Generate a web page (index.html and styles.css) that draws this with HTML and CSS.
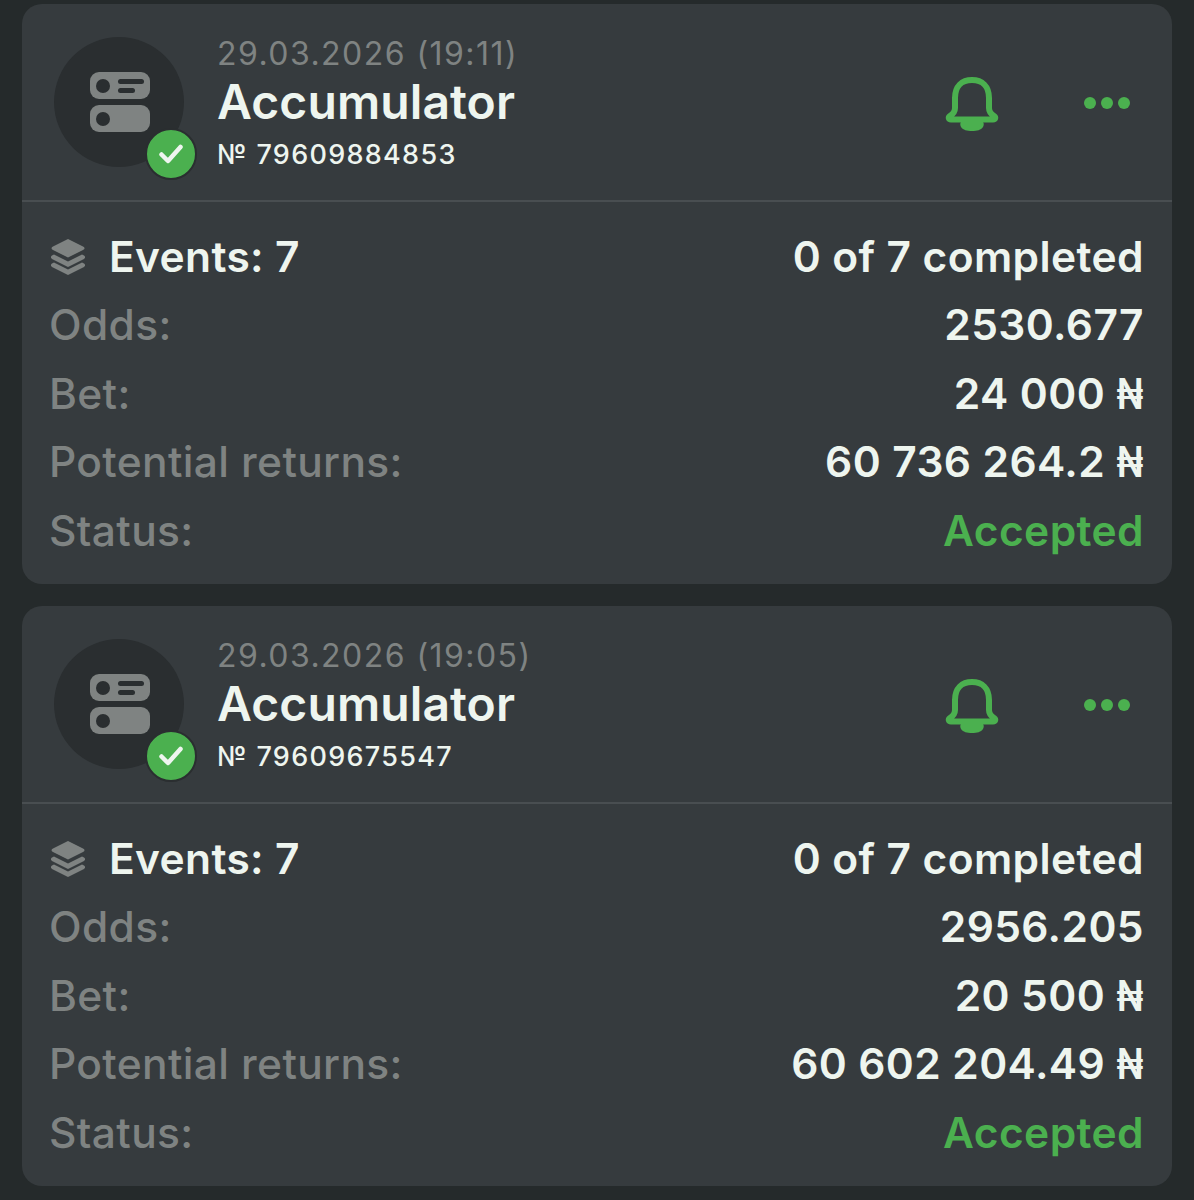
FILE: index.html
```html
<!DOCTYPE html>
<html lang="en">
<head>
<meta charset="utf-8">
<title>Bets</title>
<link rel="stylesheet" href="styles.css">
</head>
<body>
<svg class="defs" width="0" height="0" aria-hidden="true">
  <defs>
    <symbol id="coupon" viewBox="0 0 60 60">
      <rect x="0" y="0" width="60" height="27" rx="9" fill="#7f8382"/>
      <rect x="0" y="33" width="60" height="27" rx="9" fill="#7f8382"/>
      <circle cx="13" cy="14" r="7" fill="#2a2e30"/>
      <circle cx="13" cy="47" r="7" fill="#2a2e30"/>
      <rect x="28" y="7" width="26" height="5" rx="2.500" fill="#2a2e30"/>
      <rect x="28" y="16" width="17" height="5" rx="2.500" fill="#2a2e30"/>
    </symbol>
    <symbol id="bell" viewBox="0 0 54 56">
      <path d="M10 32V22C10 10 17 4 27 4s17 6 17 18v10c0 3 2 6 5 8 2 1.500 1.500 3.500-1 3.500H6c-2.500 0-3-2-1-3.500 3-2 5-5 5-8Z" fill="none" stroke="#4bb04f" stroke-width="6" stroke-linejoin="round"/>
      <path d="M16 46h22c1 1 1 3 0 5-2 3-6 4-11 4s-9-1-11-4c-1-2-1-4 0-5Z" fill="#4bb04f"/>
    </symbol>
    <symbol id="layers" viewBox="0 0 34 36">
      <path d="M17 0 32 7.500c2 1 2 2.500 0 3.500L17 18.500 2 11C0 10 0 8.500 2 7.500Z" fill="#7f8382"/>
      <path d="M3 15.500 17 22.500l14-7 2 1c1.500 1 1.500 2.500 0 3.500L17 28 1 20c-1.500-1-1.500-2.500 0-3.500Z" fill="#7f8382"/>
      <path d="M3 23.500 17 30.500l14-7 2 1c1.500 1 1.500 2.500 0 3.500L17 36 1 28c-1.500-1-1.500-2.500 0-3.500Z" fill="#7f8382"/>
    </symbol>
    <symbol id="check" viewBox="0 0 24 20">
      <path d="M2.500 10.500 9 17 21.500 3" fill="none" stroke="#eef5ef" stroke-width="4.500" stroke-linecap="round" stroke-linejoin="round"/>
    </symbol>
  </defs>
</svg>

<main class="list">
  <article class="card">
    <header class="head">
      <div class="avatar">
        <svg class="avatar-icon"><use href="#coupon"/></svg>
        <span class="badge"><svg class="badge-icon"><use href="#check"/></svg></span>
      </div>
      <div class="titles">
        <div class="date">29.03.2026 (19:11)</div>
        <div class="title">Accumulator</div>
        <div class="number">№ 79609884853</div>
      </div>
      <svg class="bell"><use href="#bell"/></svg>
      <div class="more"><i></i><i></i><i></i></div>
    </header>
    <div class="body">
      <div class="row"><span class="events"><svg class="layers"><use href="#layers"/></svg>Events: 7</span><span class="value">0 of 7 completed</span></div>
      <div class="row"><span class="label">Odds:</span><span class="value">2530.677</span></div>
      <div class="row"><span class="label">Bet:</span><span class="value">24 000 <span class="naira">₦</span></span></div>
      <div class="row"><span class="label">Potential returns:</span><span class="value">60 736 264.2 <span class="naira">₦</span></span></div>
      <div class="row"><span class="label">Status:</span><span class="value accepted">Accepted</span></div>
    </div>
  </article>

  <article class="card">
    <header class="head">
      <div class="avatar">
        <svg class="avatar-icon"><use href="#coupon"/></svg>
        <span class="badge"><svg class="badge-icon"><use href="#check"/></svg></span>
      </div>
      <div class="titles">
        <div class="date">29.03.2026 (19:05)</div>
        <div class="title">Accumulator</div>
        <div class="number">№ 79609675547</div>
      </div>
      <svg class="bell"><use href="#bell"/></svg>
      <div class="more"><i></i><i></i><i></i></div>
    </header>
    <div class="body">
      <div class="row"><span class="events"><svg class="layers"><use href="#layers"/></svg>Events: 7</span><span class="value">0 of 7 completed</span></div>
      <div class="row"><span class="label">Odds:</span><span class="value">2956.205</span></div>
      <div class="row"><span class="label">Bet:</span><span class="value">20 500 <span class="naira">₦</span></span></div>
      <div class="row"><span class="label">Potential returns:</span><span class="value">60 602 204.49 <span class="naira">₦</span></span></div>
      <div class="row"><span class="label">Status:</span><span class="value accepted">Accepted</span></div>
    </div>
  </article>
</main>
</body>
</html>
```
FILE: styles.css
```css
* { box-sizing: border-box; }
html, body { margin: 0; height: 1200px; overflow: hidden; }
body {
  background: #252a2b;
  font-family: Inter, "Liberation Sans", sans-serif;
  color: #eef5ef;
}
.defs { display: block; height: 0; }
.list {
  display: flex;
  flex-direction: column;
  gap: 22px;
  padding: 4px 22px 0;
}
.card {
  height: 580px;
  background: #363b3e;
  border-radius: 20px;
  overflow: hidden;
}
.head {
  display: flex;
  align-items: flex-start;
  height: 198px;
  padding: 33px 42px 0 32px;
  border-bottom: 2px solid #494e51;
}
.avatar {
  position: relative;
  flex: none;
  display: flex;
  align-items: center;
  justify-content: center;
  width: 130px;
  height: 130px;
  border-radius: 50%;
  background: #2a2e30;
}
.avatar-icon { width: 60px; height: 60px; margin-left: 1px; }
.badge {
  position: absolute;
  right: -13px;
  bottom: -13px;
  display: flex;
  align-items: center;
  justify-content: center;
  width: 52px;
  height: 52px;
  border: 2px solid #2a2e30;
  border-radius: 50%;
  background: #4bb04f;
}
.badge-icon { width: 24px; height: 20px; }
.titles {
  flex: 1;
  margin-left: 34px;
  margin-top: -3px;
}
.date { font-size: 32px; line-height: 40px; color: #7f8382; letter-spacing: 1.45px; margin-left: -1px; }
.title { font-size: 48px; line-height: 56px; font-weight: 600; letter-spacing: 0.1px; margin-left: -1px; }
.number { font-size: 27px; line-height: 40px; font-weight: 500; letter-spacing: 1.3px; margin: 5px 0 0 -1px; }
.bell { flex: none; width: 54px; height: 56px; margin-top: 39px; }
.more {
  flex: none;
  display: flex;
  gap: 5px;
  margin: 60px 0 0 85px;
}
.more i {
  display: block;
  width: 12px;
  height: 12px;
  border-radius: 50%;
  background: #4bb04f;
}
.body {
  display: flex;
  flex-direction: column;
  padding: 20px 28px 0;
}
.row {
  display: flex;
  align-items: center;
  justify-content: space-between;
  height: 68.500px;
  font-size: 42.500px;
  font-weight: 600;
  letter-spacing: 0.35px;
}
.events { display: flex; align-items: center; gap: 24px; }
.layers { flex: none; width: 34px; height: 36px; margin: 2px 0 0 1px; }
.label { color: #7f8382; font-weight: 500; margin-left: -1px; }
.value { letter-spacing: 0.4px; }
.naira {
  display: inline-block;
  margin-left: -5px;
  transform: scaleX(0.83);
  transform-origin: right center;
}
.accepted { color: #4bb04f; }
```
